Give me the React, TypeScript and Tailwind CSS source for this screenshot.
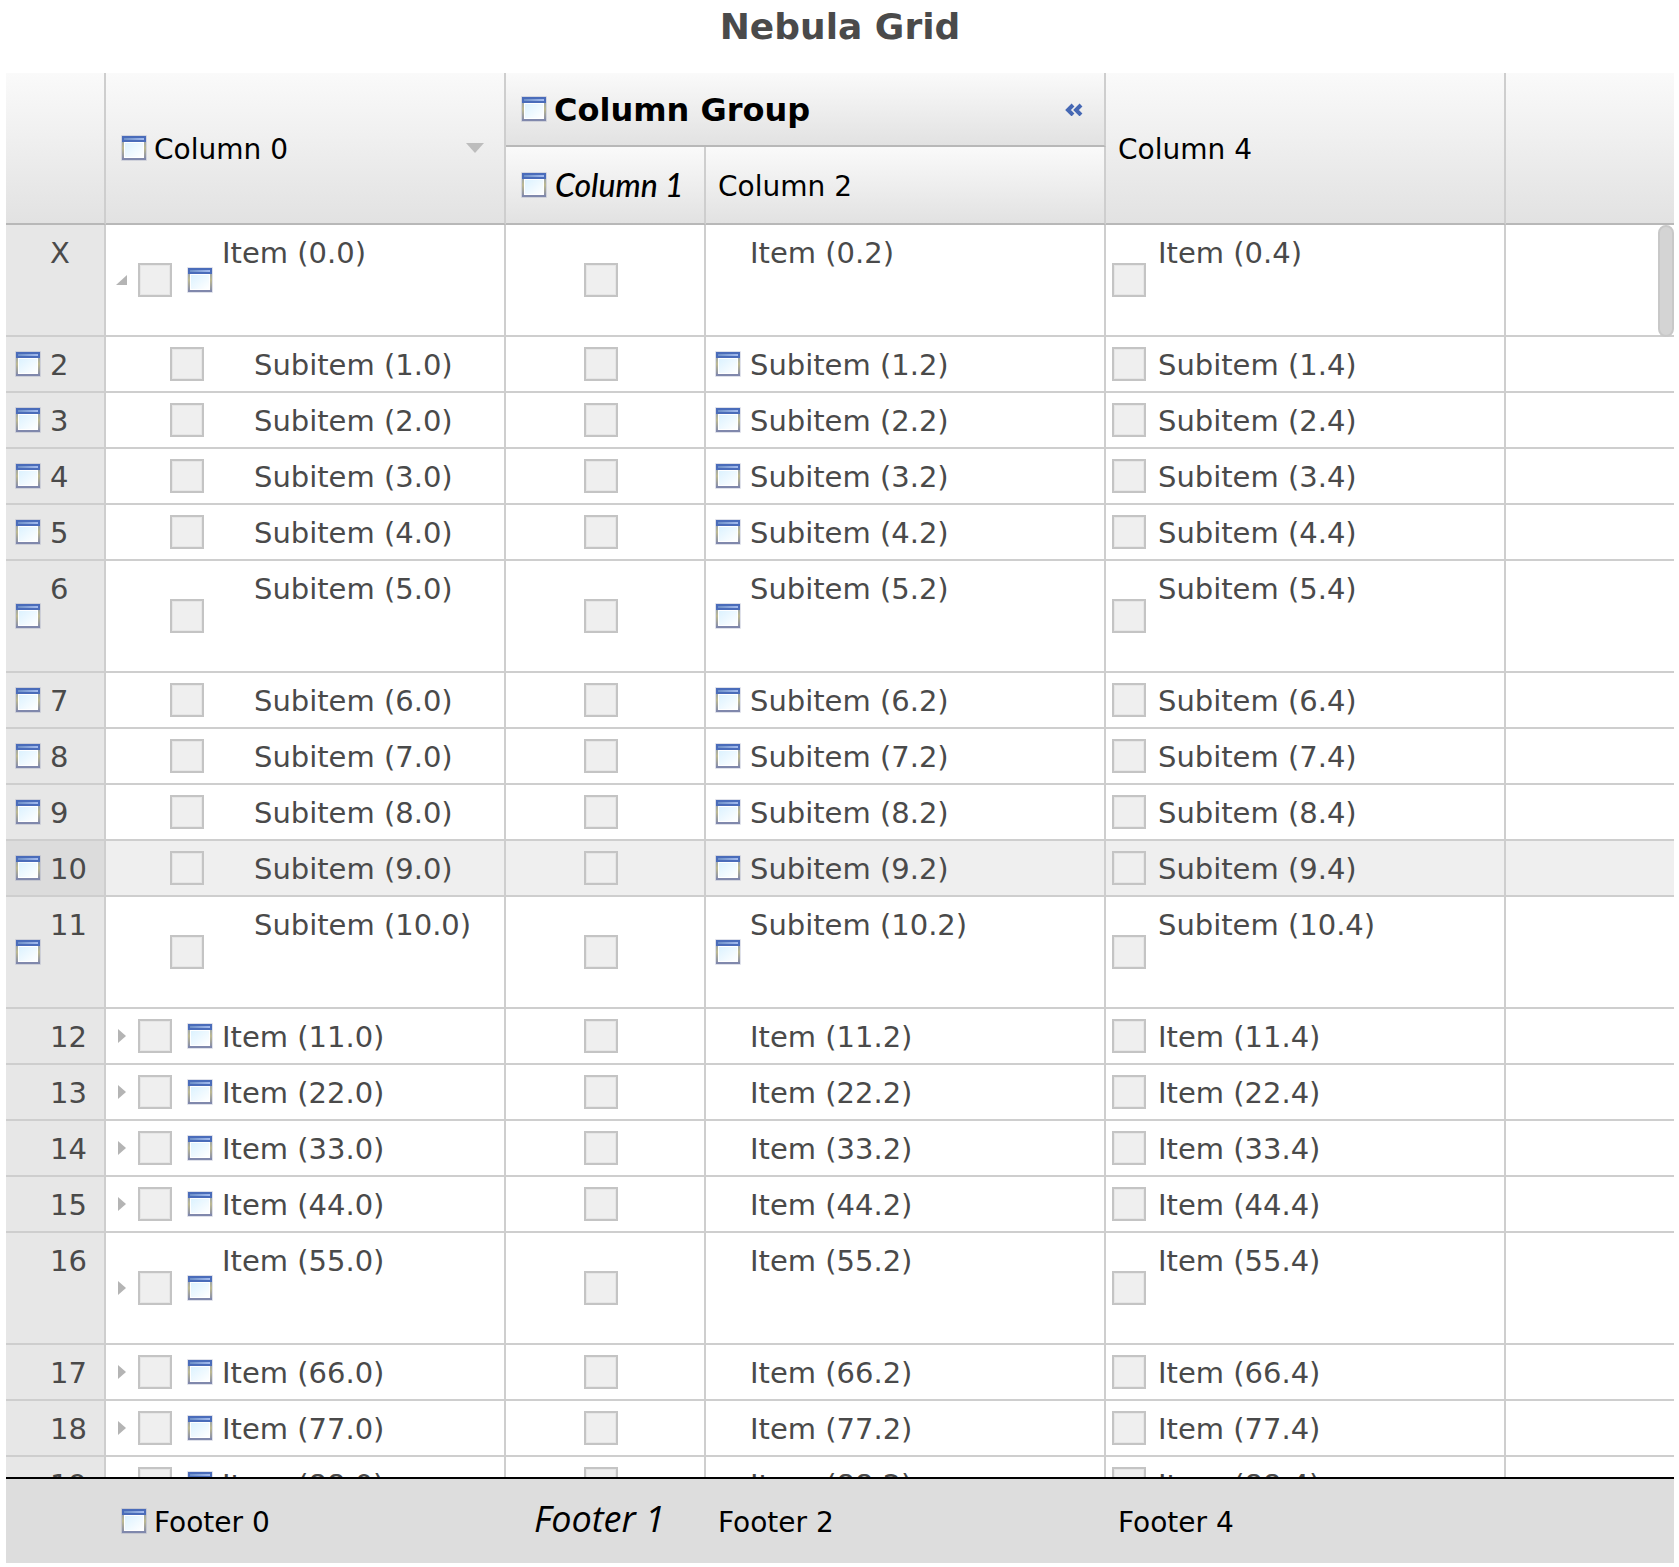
import React from "react";

type Row = {
  label: string;
  kind: "Item" | "Subitem";
  index: number;
  tall?: boolean;
  expanded?: boolean;
  selected?: boolean;
};

const rows: Row[] = [
  { label: "X", kind: "Item", index: 0, tall: true, expanded: true },
  { label: "2", kind: "Subitem", index: 1 },
  { label: "3", kind: "Subitem", index: 2 },
  { label: "4", kind: "Subitem", index: 3 },
  { label: "5", kind: "Subitem", index: 4 },
  { label: "6", kind: "Subitem", index: 5, tall: true },
  { label: "7", kind: "Subitem", index: 6 },
  { label: "8", kind: "Subitem", index: 7 },
  { label: "9", kind: "Subitem", index: 8 },
  { label: "10", kind: "Subitem", index: 9, selected: true },
  { label: "11", kind: "Subitem", index: 10, tall: true },
  { label: "12", kind: "Item", index: 11 },
  { label: "13", kind: "Item", index: 22 },
  { label: "14", kind: "Item", index: 33 },
  { label: "15", kind: "Item", index: 44 },
  { label: "16", kind: "Item", index: 55, tall: true },
  { label: "17", kind: "Item", index: 66 },
  { label: "18", kind: "Item", index: 77 },
  { label: "19", kind: "Item", index: 88 },
];

function WindowIcon() {
  return (
    <svg className="size-[26px] shrink-0" viewBox="0 0 26 26" aria-hidden="true">
      <defs>
        <linearGradient id="frame" x1="0" y1="0" x2="0" y2="1">
          <stop offset="0.2" stopColor="#9aa4ac" />
          <stop offset="0.5" stopColor="#bdb990" />
          <stop offset="1" stopColor="#8088ac" />
        </linearGradient>
        <linearGradient id="pane" x1="0" y1="0" x2="1" y2="1">
          <stop offset="0" stopColor="#dcf2ff" />
          <stop offset="1" stopColor="#ffffff" />
        </linearGradient>
        <linearGradient id="bar" x1="0" y1="0" x2="1" y2="0">
          <stop offset="0" stopColor="#6c8fc8" />
          <stop offset="1" stopColor="#a4bbee" />
        </linearGradient>
      </defs>
      <rect x="0" y="0" width="26" height="26" rx="1" fill="#8088ac" opacity="0.25" />
      <rect x="1" y="1" width="24" height="24" fill="url(#frame)" />
      <rect x="3" y="7" width="20" height="16" fill="#ffffff" />
      <rect x="4" y="8" width="18" height="14" fill="url(#pane)" />
      <rect x="1" y="23" width="24" height="2" fill="#8088ac" />
      <rect x="1" y="1" width="24" height="6" fill="#4a6cba" />
      <rect x="3" y="3" width="20" height="2" fill="url(#bar)" />
    </svg>
  );
}

function Check({ label }: { label: string }) {
  return (
    <input
      type="checkbox"
      aria-label={label}
      className="size-[34px] shrink-0 appearance-none border-2 border-[#c4c4c4] bg-[#efefef] shadow-[inset_0_0_0_1px_#e6e6e6]"
    />
  );
}

function Columns() {
  return (
    <colgroup>
      <col className="w-[100px]" />
      <col className="w-[400px]" />
      <col className="w-[200px]" />
      <col className="w-[400px]" />
      <col className="w-[400px]" />
      <col />
    </colgroup>
  );
}

const tableClass = "w-full table-fixed border-separate border-spacing-0 text-left";
const headBase =
  "border-b-2 border-r-[#cecece] border-b-[#b8b8b8] bg-linear-to-b from-[#fafafa] to-[#e2e2e2] p-0 font-normal";
const headClass = `border-r-2 ${headBase}`;
const cellClass = "border-r-2 border-b-2 border-[#cecece] p-0";
const textClass = "self-start pt-0.5 leading-[52px] whitespace-nowrap";

function GridRow({ row }: { row: Row }) {
  const height = row.tall ? "h-[110px]" : "h-[54px]";
  const sub = row.kind === "Subitem";
  const name = (column: number) => `${row.kind} (${row.index}.${column})`;
  return (
    <tr className={row.selected ? "bg-[#efefef]" : "bg-white"}>
      <th
        scope="row"
        className={`${cellClass} font-normal ${row.selected ? "bg-[#dcdcdc]" : "bg-[#e7e7e7]"}`}
      >
        <div className={`flex items-center gap-[9px] pl-[9px] ${height}`}>
          {sub ? <WindowIcon /> : <span className="w-[26px]" />}
          <span className={textClass}>{row.label}</span>
        </div>
      </th>
      <td className={cellClass}>
        {sub ? (
          <div className={`flex items-center gap-[50px] pl-16 ${height}`}>
            <Check label={name(0)} />
            <span className={textClass}>{name(0)}</span>
          </div>
        ) : (
          <div className={`flex items-center pl-[10px] ${height}`}>
            <button
              type="button"
              aria-label={row.expanded ? "Collapse" : "Expand"}
              className="flex w-[22px] shrink-0"
            >
              <svg className="h-4 w-3" viewBox="0 0 12 16" aria-hidden="true">
                {row.expanded ? (
                  <path d="M11 3v10H0z" fill="#b4b4b4" />
                ) : (
                  <path d="M2 1l8 7l-8 7z" fill="#b4b4b4" />
                )}
              </svg>
            </button>
            <Check label={name(0)} />
            <span className="flex w-[50px] shrink-0 pl-[15px]">
              <WindowIcon />
            </span>
            <span className={textClass}>{name(0)}</span>
          </div>
        )}
      </td>
      <td className={cellClass}>
        <div className={`flex items-center justify-center pr-2 ${height}`}>
          <Check label={name(1)} />
        </div>
      </td>
      <td className={cellClass}>
        <div className={`flex items-center gap-[9px] pl-[9px] ${height}`}>
          {sub ? <WindowIcon /> : <span className="w-[26px]" />}
          <span className={textClass}>{name(2)}</span>
        </div>
      </td>
      <td className={cellClass}>
        <div className={`flex items-center gap-3 pl-[6px] ${height}`}>
          <Check label={name(4)} />
          <span className={textClass}>{name(4)}</span>
        </div>
      </td>
      <td className="border-b-2 border-[#cecece] p-0" />
    </tr>
  );
}

export default function App() {
  return (
    <main className="flex h-screen flex-col bg-white pr-[5px] pb-1 pl-[6px] font-['Verdana','DejaVu_Sans',sans-serif] text-[28px] text-[#4a4a4a]">
      <h1 className="h-[73px] text-center text-[36px] leading-[54px] font-bold">Nebula Grid</h1>

      <section className="flex min-h-0 flex-1 flex-col" aria-label="Nebula Grid">
        <table className={`${tableClass} text-black`}>
          <Columns />
          <thead>
            <tr className="h-[74px]">
              <th rowSpan={2} className={headClass} />
              <th rowSpan={2} scope="col" className={headClass}>
                <div className="flex items-center gap-[7px] pr-5 pl-[15px]">
                  <WindowIcon />
                  <span className="pt-[3px]">Column 0</span>
                  <svg className="ml-auto h-[10px] w-[18px]" viewBox="0 0 18 10" aria-hidden="true">
                    <path d="M0 0h18l-9 10z" fill="#bdbdbd" />
                  </svg>
                </div>
              </th>
              <th colSpan={2} scope="colgroup" className={headClass}>
                <div className="flex items-center gap-[7px] pr-5 pl-[15px]">
                  <WindowIcon />
                  <span className="pt-0.5 text-[32px] leading-10 font-bold">Column Group</span>
                  <button type="button" aria-label="Collapse group" className="ml-auto">
                    <svg className="h-[14px] w-5" viewBox="0 0 20 14" aria-hidden="true">
                      <path
                        d="M9 3L4 8l5 5M17 3l-5 5l5 5"
                        fill="none"
                        stroke="#4668b4"
                        strokeWidth="4"
                      />
                    </svg>
                  </button>
                </div>
              </th>
              <th rowSpan={2} scope="col" className={`${headClass} pt-[3px]`}>
                <span className="pl-3">Column 4</span>
              </th>
              <th rowSpan={2} className={headBase} />
            </tr>
            <tr className="h-[78px]">
              <th scope="col" className={headClass}>
                <div className="flex items-center gap-2 pl-[15px]">
                  <WindowIcon />
                  <span className="font-['Lato'] text-[32px] font-medium whitespace-nowrap italic">
                    Column 1
                  </span>
                </div>
              </th>
              <th scope="col" className={`${headClass} pt-[3px]`}>
                <span className="pl-3">Column 2</span>
              </th>
            </tr>
          </thead>
        </table>

        <div className="relative min-h-0 flex-1 overflow-hidden">
          <table className={`${tableClass} text-[29px]`}>
            <Columns />
            <tbody>
              {rows.map((row) => (
                <GridRow key={row.label} row={row} />
              ))}
            </tbody>
          </table>
          <div className="absolute top-0 right-0 h-28 w-4 rounded-full border-2 border-[#c8c8c8] bg-[#d4d4d4]" />
        </div>

        <table className={`${tableClass} border-t-2 border-black bg-[#dddddd] text-black`}>
          <Columns />
          <tfoot>
            <tr className="h-[84px]">
              <td className="p-0" />
              <td className="p-0">
                <div className="flex items-center gap-[7px] pl-[15px]">
                  <WindowIcon />
                  <span className="pt-[3px]">Footer 0</span>
                </div>
              </td>
              <td className="p-0 pb-1 pl-7 font-['Open_Sans'] text-[36px] leading-10 whitespace-nowrap italic">
                Footer 1
              </td>
              <td className="p-0 pt-[3px] pl-3">Footer 2</td>
              <td className="p-0 pt-[3px] pl-3">Footer 4</td>
              <td className="p-0" />
            </tr>
          </tfoot>
        </table>
      </section>
    </main>
  );
}
